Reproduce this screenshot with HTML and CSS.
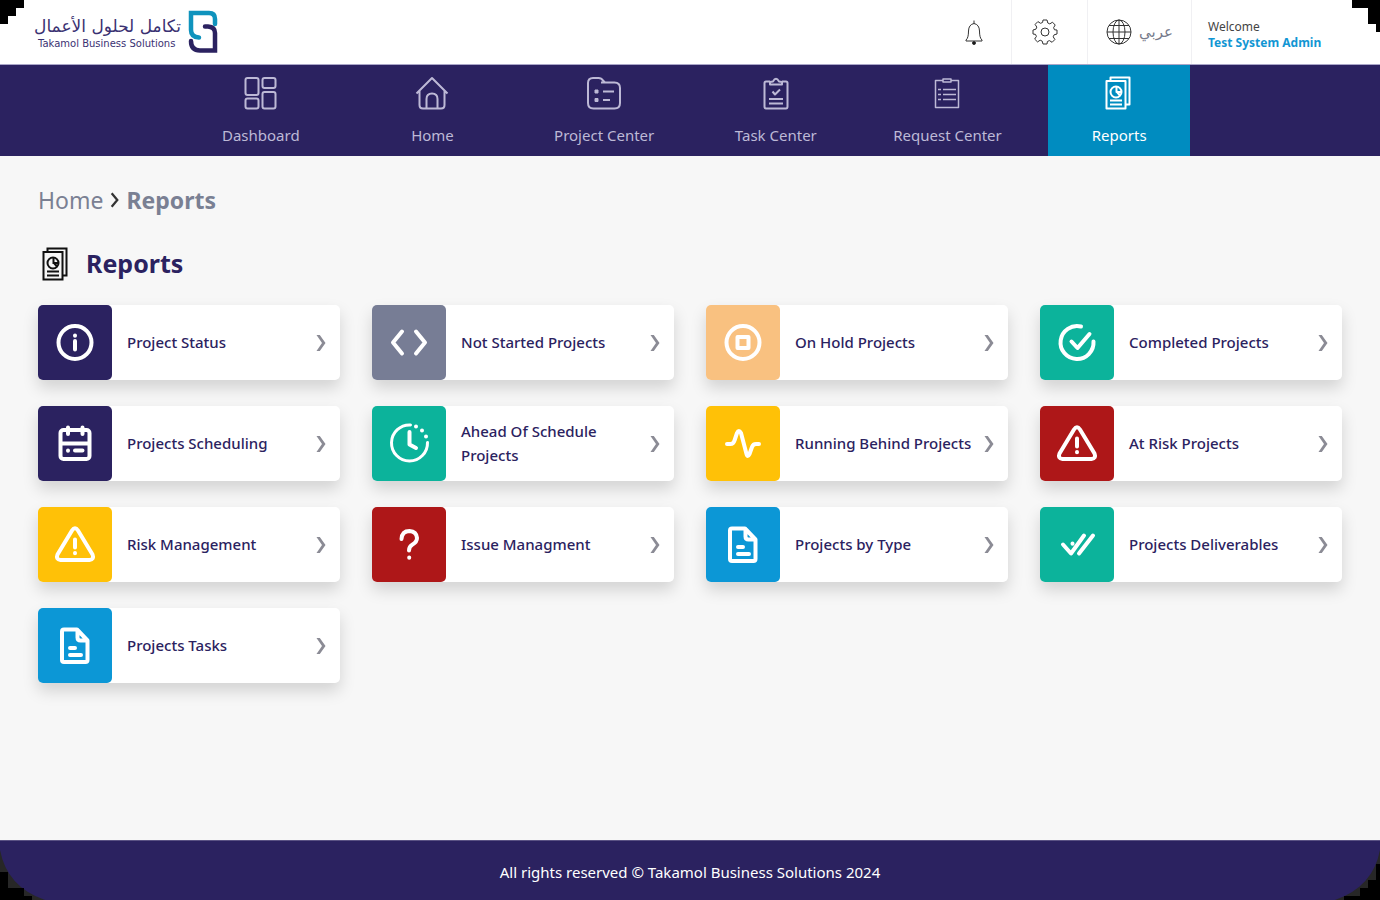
FILE: index.html
```html
<!DOCTYPE html>
<html lang="en">
<head>
<meta charset="utf-8">
<meta name="viewport" content="width=device-width, initial-scale=1">
<title>Reports</title>
<link rel="stylesheet" href="styles.css">
</head>
<body>
<svg class="sprite" aria-hidden="true">
  <symbol id="chevron" viewBox="0 0 10 18"><path d="M.5 1h3.300L9.500 9l-5.700 8H.5L6 9z" fill="#8b8b95"/></symbol>
  <symbol id="reports" viewBox="0 0 36 36" fill="none" stroke="currentColor"><path d="M9.500 5V2.500h19v27H25"/><path d="M5.500 6h19v27.500h-19z"/><circle cx="15" cy="17" r="5.500"/><path d="M15.500 11.500v5.500h5M16 17l3 3.500"/><path d="M9 25.500h12M9 29.500h12"/></symbol>
  <symbol id="warning" viewBox="0 0 44 44"><path d="M19 7.500q3-4.500 6 0l14.500 24q2 5-3 5.500h-29q-5-.5-3-5.500z"/><path d="M22 16.500v8M22 30v.2"/></symbol>
  <symbol id="file" viewBox="0 0 44 44"><path d="M11 5.500h13l10.500 11V36a2 2 0 0 1-2 2H11a2 2 0 0 1-2-2V7.500a2 2 0 0 1 2-2zM24.500 6v7.500q0 3 3 3H34M17 24h5M17 31h11"/></symbol>
</svg>

<header class="topbar">
  <a class="logo" href="#" aria-label="Takamol Business Solutions">
    <span class="logo-text"><span class="logo-ar" lang="ar" dir="rtl">تكامل لحلول الأعمال</span><span class="logo-en">Takamol Business Solutions</span></span>
    <svg class="logo-mark" viewBox="0 0 30 44" fill="none" stroke-width="4.500" stroke-linecap="round"><path d="M27 14V9q0-6-6-6H3v17q0 7 8 7.500" stroke="#0f93bd"/><path d="M3 31q0 9.500 9 9.500h15V23q0-6-7-6.500h-3" stroke="#2b2260"/></svg>
  </a>
  <div class="tools">
    <button class="tool tool-bell" aria-label="Notifications"><svg class="tool-icon" viewBox="0 0 26 26"><path d="M5 21q2.500-2 2.500-9 .2-6.500 5.500-7.500 5.300 1 5.500 7.500 0 7 2.500 9v1H5zM13 4.500v-3"/><circle cx="13" cy="24" r="1.500" fill="#111"/></svg></button>
    <button class="tool tool-gear" aria-label="Settings"><svg class="tool-icon" viewBox="0 0 26 26"><path d="M11 1h4l.8 3 2 .9 2.700-1.700 2.700 2.800-1.600 2.700.9 2.100L25 11v4l-2.900.8-.9 2 1.700 2.700-2.800 2.800-2.700-1.700-2 .9L15 25h-4l-.8-2.900-2-.9-2.700 1.700-2.800-2.800 1.700-2.700-.9-2L1 15v-4l2.900-.8.9-2.100-1.700-2.700 2.800-2.800 2.700 1.700 2-.9z"/><circle cx="13" cy="13" r="4"/></svg></button>
    <button class="tool tool-lang"><svg class="tool-icon" viewBox="0 0 26 26"><circle cx="13" cy="13" r="12"/><ellipse cx="13" cy="13" rx="6" ry="12"/><path d="M13 1v24M1 13h24M3 6.500h20M3 19.500h20"/></svg><span lang="ar" dir="rtl">عربي</span></button>
    <div class="user"><span>Welcome</span><a href="#">Test System Admin</a></div>
  </div>
</header>

<nav class="nav">
  <div class="nav-list">
    <a class="nav-item" href="#"><svg class="nav-icon" viewBox="0 0 36 36"><rect x="2.500" y="3" width="13" height="17" rx="2"/><rect x="19.500" y="3" width="13" height="10" rx="2"/><rect x="2.500" y="23.500" width="13" height="10" rx="2"/><rect x="19.500" y="17" width="13" height="16.500" rx="2"/></svg>Dashboard</a>
    <a class="nav-item" href="#"><svg class="nav-icon" viewBox="0 0 36 36"><path d="M2.500 18.500L18 3l15.500 15.500M5.500 16v14q0 3.500 3.500 3.500h18q3.500 0 3.500-3.500V16M12.500 33V24q0-5.500 5.500-5.500t5.500 5.500v9"/></svg>Home</a>
    <a class="nav-item" href="#"><svg class="nav-icon" viewBox="0 0 36 36"><path d="M2 8q0-5 5-5h5.500q3 0 4.500 2.500l2 2h9.500q5.500 0 5.500 5.500v15q0 5.500-5.500 5.500H7.500Q2 33.500 2 28zM15 7.500h4M17 16.500h11M17 25h7"/><path d="M9 15h3v3H9zM9 23.500h3v3H9z" fill="currentColor" stroke-width="1"/></svg>Project Center</a>
    <a class="nav-item" href="#"><svg class="nav-icon" viewBox="0 0 36 36"><path d="M12 6.500H8q-1.500 0-1.500 1.500v23.500q0 2 1.500 2h20q1.500 0 1.500-2V8q0-1.500-1.500-1.500h-4M12 9.500V7l3-.5q3-5.500 6 0l3 .5v2.500zM14.500 16.500l2.500 3 5-5M11 24h14M11 28.500h14"/></svg>Task Center</a>
    <a class="nav-item" href="#"><svg class="nav-icon nav-icon-thin" viewBox="0 0 36 36"><path d="M14 5.500H6.500v27h23v-27H22M14 4h8v3h-8zM14 14.500h13M14 19.500h13M14 24.500h13M9 14.500h3M9 19.500h3M9 24.500h3"/></svg>Request Center</a>
    <a class="nav-item active" href="#" aria-current="page"><svg class="nav-icon"><use href="#reports"/></svg>Reports</a>
  </div>
</nav>

<main class="content">
  <div class="crumbs"><a href="#">Home</a><svg class="crumb-sep" viewBox="0 0 8 14"><path d="M1.500 1L6.500 7l-5 6"/></svg><strong>Reports</strong></div>
  <h1 class="title"><svg class="title-icon"><use href="#reports"/></svg><span>Reports</span></h1>
  <div class="cards">
    <a class="card" href="#"><span class="tile navy"><svg class="tile-icon" viewBox="0 0 44 44"><circle cx="22" cy="21.500" r="16.500"/><path d="M22 20v8.500M22 14.500v.2"/></svg></span><span class="label">Project Status</span><svg class="arrow"><use href="#chevron"/></svg></a>
    <a class="card" href="#"><span class="tile gray"><svg class="tile-icon" viewBox="0 0 44 44"><path d="M15 10.500l-9 11 9 11M29 10.500l9 11-9 11"/></svg></span><span class="label">Not Started Projects</span><svg class="arrow"><use href="#chevron"/></svg></a>
    <a class="card" href="#"><span class="tile peach"><svg class="tile-icon" viewBox="0 0 44 44"><circle cx="22" cy="21.500" r="16.500"/><path d="M16.500 16h11v11h-11z"/></svg></span><span class="label">On Hold Projects</span><svg class="arrow"><use href="#chevron"/></svg></a>
    <a class="card" href="#"><span class="tile green"><svg class="tile-icon" viewBox="0 0 44 44"><path d="M26 5.500a16.500 16.500 0 1 0 12.500 15M16.500 20.500l6 6.500L34.500 13"/></svg></span><span class="label">Completed Projects</span><svg class="arrow"><use href="#chevron"/></svg></a>
    <a class="card" href="#"><span class="tile navy"><svg class="tile-icon" viewBox="0 0 44 44"><rect x="7.500" y="8" width="29" height="29" rx="3"/><path d="M8 21.500h28M15 5.500V12M29.500 5.500V12M15 28.500v.2M22 28.500h7.500"/></svg></span><span class="label">Projects Scheduling</span><svg class="arrow"><use href="#chevron"/></svg></a>
    <a class="card" href="#"><span class="tile green"><svg class="tile-icon" viewBox="0 0 44 44"><path stroke-width="3" d="M23.500 3a18 18 0 1 0 17 17.500"/><path d="M22.500 10v12.500l6.500 3.500"/><path d="M29 4.500v.1M35 8.500v.1M39 14.500v.1"/></svg></span><span class="label">Ahead Of Schedule Projects</span><svg class="arrow"><use href="#chevron"/></svg></a>
    <a class="card" href="#"><span class="tile amber"><svg class="tile-icon" viewBox="0 0 44 44"><path d="M6 22h3.500q3 0 4-3.500l2.500-7.500q1.800-4 4 0l5.500 21q1 4 3 0l2.500-7q1-3 4-3H38"/></svg></span><span class="label">Running Behind Projects</span><svg class="arrow"><use href="#chevron"/></svg></a>
    <a class="card" href="#"><span class="tile red"><svg class="tile-icon"><use href="#warning"/></svg></span><span class="label">At Risk Projects</span><svg class="arrow"><use href="#chevron"/></svg></a>
    <a class="card" href="#"><span class="tile amber"><svg class="tile-icon"><use href="#warning"/></svg></span><span class="label">Risk Management</span><svg class="arrow"><use href="#chevron"/></svg></a>
    <a class="card" href="#"><span class="tile red"><svg class="tile-icon" viewBox="0 0 44 44"><path d="M14.500 16q.5-8 8-8 7 .5 7.500 7 0 4-4.500 6.500-3.500 2-3.500 6M22.200 34.500v.2"/></svg></span><span class="label">Issue Managment</span><svg class="arrow"><use href="#chevron"/></svg></a>
    <a class="card" href="#"><span class="tile blue"><svg class="tile-icon"><use href="#file"/></svg></span><span class="label">Projects by Type</span><svg class="arrow"><use href="#chevron"/></svg></a>
    <a class="card" href="#"><span class="tile green"><svg class="tile-icon" viewBox="0 0 44 44"><path d="M8 21.500l8 9L29 12.500M24 30.500L38 12.500M17.500 20.500v.2"/></svg></span><span class="label">Projects Deliverables</span><svg class="arrow"><use href="#chevron"/></svg></a>
    <a class="card" href="#"><span class="tile blue"><svg class="tile-icon"><use href="#file"/></svg></span><span class="label">Projects Tasks</span><svg class="arrow"><use href="#chevron"/></svg></a>
  </div>
</main>

<footer class="footer">All rights reserved © Takamol Business Solutions 2024</footer>

<svg class="corner top-left" viewBox="0 0 50 50"><path d="M0 0h24v8h-8v8H8v8H0z"/></svg>
<svg class="corner top-right" viewBox="0 0 50 50"><path d="M22 0h28v32h-4v-8h-8V8H22z"/></svg>
<svg class="corner bottom-left" viewBox="0 0 50 50"><path fill="#272727" d="M0 0Q7 37 45 50H0z"/><path d="M0 22h8v16h16v8h8v4H0z"/></svg>
<svg class="corner bottom-right" viewBox="0 0 50 50"><path fill="#272727" d="M50 0Q43 37 5 50h45z"/><path d="M50 14h-4v16h-8v8h-8v8H14v4h36z"/></svg>
</body>
</html>
```
FILE: styles.css
```css
* { box-sizing: border-box; }
body {
  margin: 0;
  min-height: 100vh;
  position: relative;
  display: flex;
  flex-direction: column;
  background: #f7f7f7;
  color: #2b2260;
  font-family: "Noto Sans", "Open Sans", sans-serif;
  font-size: 15px;
}
a { color: inherit; text-decoration: none; }
svg { display: block; flex: none; }
.sprite { position: absolute; width: 0; height: 0; }

.topbar {
  display: flex;
  justify-content: space-between;
  height: 65px;
  padding-left: 38px;
  background: #fff;
  border-bottom: 1px solid #aaa6c8;
}
.logo { display: flex; align-items: center; gap: 7px; }
.logo-text { display: flex; flex-direction: column; width: 143px; color: #3a3172; }
.logo-ar { font: 17px/24px "DejaVu Sans", sans-serif; white-space: nowrap; }
.logo-en { font: 10px/12px "DejaVu Sans", sans-serif; white-space: nowrap; }
.logo-mark { width: 30px; height: 44px; }
.tools { display: flex; }
.tool {
  display: flex;
  align-items: center;
  justify-content: center;
  gap: 7px;
  padding: 0;
  border: 0;
  border-right: 1px solid #f0f0f3;
  background: none;
  color: #777b8c;
  font: 15px "DejaVu Sans", sans-serif;
}
.tool-bell, .tool-gear { width: 76px; }
.tool-gear { padding-right: 9px; }
.tool-lang { width: 104px; }
.tool-icon { width: 26px; height: 26px; fill: none; stroke: #333; stroke-width: 1; }
.user {
  display: flex;
  flex-direction: column;
  justify-content: center;
  width: 188px;
  padding: 6px 0 0 16px;
  color: #444;
  font-size: 12px;
  line-height: 16px;
}
.user a { color: #1296d3; font-weight: 700; }

.nav { background: #2b2260; }
.nav-list {
  display: grid;
  grid-template-columns: repeat(6, 1fr);
  gap: 30px;
  max-width: 1000px;
  margin: 0 auto;
}
.nav-item {
  display: flex;
  flex-direction: column;
  align-items: center;
  gap: 13px;
  height: 91px;
  padding-top: 10px;
  color: #bdb9d6;
  line-height: 22px;
  white-space: nowrap;
}
.nav-item.active { background: #008cc0; color: #fff; }
.nav-icon { width: 36px; height: 36px; fill: none; stroke: currentColor; stroke-width: 2; stroke-linejoin: round; }
.nav-icon-thin { stroke-width: 1.5; }

.content { flex: 1; padding: 27px 38px 40px; }
.crumbs {
  display: flex;
  align-items: center;
  gap: 7px;
  color: #7a8093;
  font-size: 23px;
  line-height: 34px;
}
.crumb-sep { width: 9px; height: 16px; fill: none; stroke: #333; stroke-width: 2; }
.title {
  display: flex;
  align-items: center;
  gap: 12px;
  margin: 27px 0 21px;
  font-size: 25px;
  line-height: 38px;
  font-weight: 700;
}
.title span { padding-bottom: 2px; }
.title-icon { width: 36px; height: 36px; color: #111; stroke-width: 2; }
.cards { display: grid; grid-template-columns: repeat(4, 1fr); gap: 26px 32px; }
.card {
  display: flex;
  align-items: center;
  min-height: 75px;
  padding-right: 14px;
  border-radius: 5px;
  background: #fff;
  box-shadow: 0 8px 16px rgba(0, 0, 0, 0.15);
  font-weight: 500;
  line-height: 24px;
}
.tile {
  display: flex;
  align-items: center;
  justify-content: center;
  align-self: stretch;
  flex: none;
  width: 74px;
  border-radius: 5px;
}
.tile-icon { width: 44px; height: 44px; fill: none; stroke: #fff; stroke-width: 4; stroke-linecap: round; stroke-linejoin: round; }
.navy { background: #2b2260; }
.gray { background: #777d95; }
.peach { background: #f9c180; }
.green { background: #0cb39b; }
.amber { background: #ffc107; }
.red { background: #ae1718; }
.blue { background: #0c97d6; }
.label { flex: 1; padding: 0 0 2px 15px; }
.arrow { width: 10px; height: 18px; }

.footer {
  height: 60px;
  border-top: 1px solid #5a5284;
  background: #2b2260;
  color: #fff;
  line-height: 62px;
  text-align: center;
}

.corner { position: absolute; width: 50px; height: 50px; pointer-events: none; }
.top-left { top: 0; left: 0; }
.top-right { top: 0; right: 0; }
.bottom-left { bottom: 0; left: 0; }
.bottom-right { bottom: 0; right: 0; }
```
